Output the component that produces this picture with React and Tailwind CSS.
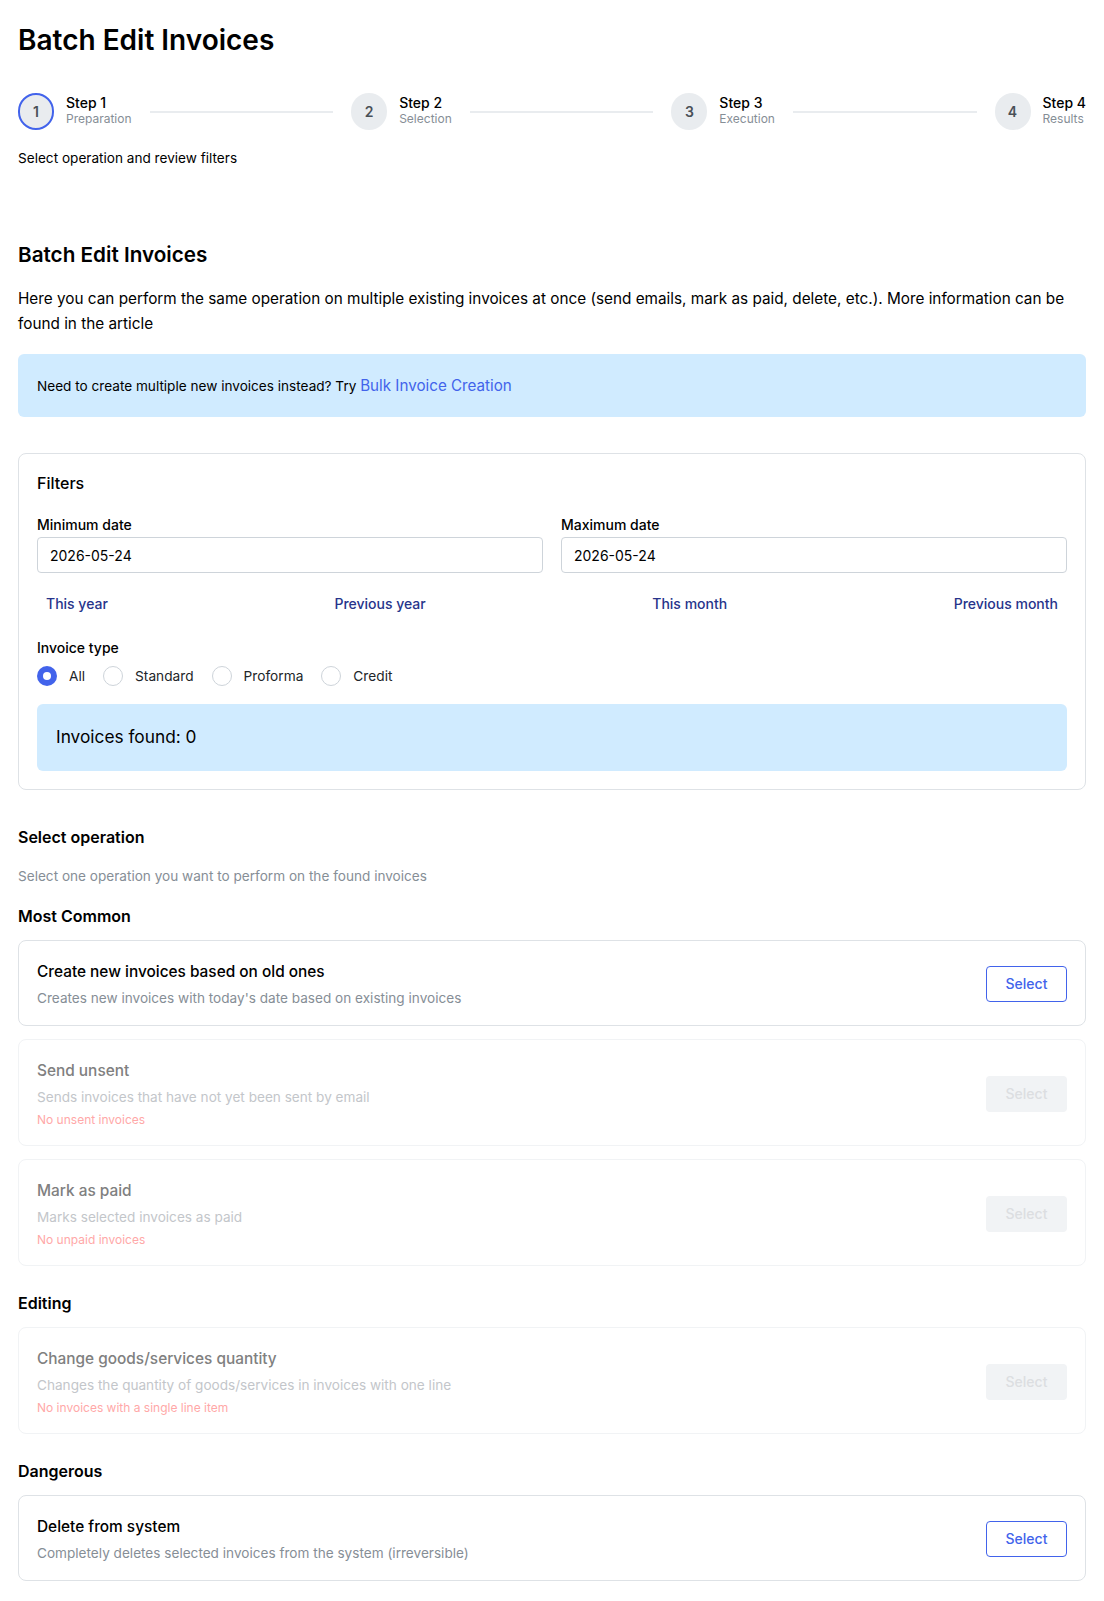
import { Fragment } from "react";

const steps = [
  { n: 1, title: "Step 1", sub: "Preparation", active: true },
  { n: 2, title: "Step 2", sub: "Selection" },
  { n: 3, title: "Step 3", sub: "Execution" },
  { n: 4, title: "Step 4", sub: "Results" },
];

function Stepper() {
  return (
    <div className="flex items-center">
      {steps.map((s, i) => (
        <Fragment key={s.n}>
          <div className="flex items-center gap-3">
            <div
              className={`flex h-[37px] w-9 items-center justify-center rounded-full bg-[#e9ecef] text-sm font-semibold text-[#495057] ${
                s.active ? "border-2 border-[#4263eb]" : ""
              }`}
            >
              {s.n}
            </div>
            <div className="pb-[3px]">
              <div className="text-sm leading-[17px] font-medium text-black">{s.title}</div>
              <div className="text-xs leading-[16px] text-[#868e96]">{s.sub}</div>
            </div>
          </div>
          {i < 3 && <div className="mx-[18px] h-0.5 flex-1 bg-[#e9ecef]" />}
        </Fragment>
      ))}
    </div>
  );
}

function Radio({ label, checked }) {
  return (
    <label className="flex items-center gap-3">
      <span
        className={`flex size-5 items-center justify-center rounded-full ${
          checked ? "bg-[#4263eb]" : "border border-[#ced4da] bg-white"
        }`}
      >
        {checked && <span className="size-2 rounded-full bg-white" />}
      </span>
      <span className="text-[13.7px] text-[#212529]">{label}</span>
    </label>
  );
}

function DateField({ label, value }) {
  return (
    <div className="flex-1">
      <div className="mb-[3px] text-sm leading-[18px] font-medium text-black">{label}</div>
      <div className="flex h-9 items-center rounded-[4px] border border-[#ced4da] bg-white px-3 pt-px text-sm text-black">
        {value}
      </div>
    </div>
  );
}

function OperationCard({ title, desc, warning, disabled }) {
  return (
    <div
      className={`flex items-center justify-between rounded-lg border px-[18px] pt-[19px] pb-4 ${
        disabled ? "border-[#f1f3f5]" : "border-[#dee2e6]"
      }`}
    >
      <div>
        <div className={`text-[15.4px] leading-6 font-medium ${disabled ? "text-[#808080]" : "text-black"}`}>{title}</div>
        <div className={`mt-[3px] text-[13.6px] leading-[22px] ${disabled ? "text-[#c3c6ca]" : "text-[#868e96]"}`}>{desc}</div>
        {warning && <div className="mt-[3px] text-xs leading-[18px] text-[#ffa8a8]">{warning}</div>}
      </div>
      <button
        className={`h-9 w-[81px] rounded-[4px] text-sm font-medium ${
          disabled ? "bg-[#f1f3f5] text-[#dcdee1]" : "border border-[#4263eb] text-[#4263eb]"
        }`}
      >
        Select
      </button>
    </div>
  );
}

export default function App() {
  return (
    <div className="min-h-[1601px] bg-white p-[18px] font-['Inter',sans-serif] text-black">
      <h1 className="mt-[3px] text-[28px] leading-[38px] font-semibold">Batch Edit Invoices</h1>
      <div className="mt-[34px]">
        <Stepper />
      </div>
      <p className="mt-[19px] text-[13.6px] leading-[18px]">Select operation and review filters</p>

      <h2 className="mt-[74px] text-[20.7px] leading-7 font-semibold">Batch Edit Invoices</h2>
      <p className="mt-[18px] text-[15.3px] leading-[24.5px]">
        Here you can perform the same operation on multiple existing invoices at once (send emails, mark as paid,
        delete, etc.). More information can be found in the article
      </p>

      <div className="mt-[18px] flex h-[63px] items-center rounded-[6px] bg-[#d0ebff] px-[19px] pt-0.5 text-[13.6px]">
        <span>Need to create multiple new invoices instead? Try&nbsp;</span>
        <a className="text-[15.2px] text-[#4263eb]">Bulk Invoice Creation</a>
      </div>

      <div className="mt-9 rounded-lg border border-[#dee2e6] p-[18px]">
        <div className="mt-px text-base leading-5 font-medium">Filters</div>
        <div className="mt-[23px] flex gap-[18px]">
          <DateField label="Minimum date" value="2026-05-24" />
          <DateField label="Maximum date" value="2026-05-24" />
        </div>
        <div className="mt-[21px] flex justify-between px-[9px] text-sm leading-[20px] font-medium text-[#27348b]">
          <a>This year</a>
          <a>Previous year</a>
          <a>This month</a>
          <a>Previous month</a>
        </div>
        <div className="mt-[25px] text-sm leading-[18px] font-medium">Invoice type</div>
        <div className="mt-[9px] flex gap-[18px]">
          <Radio label="All" checked />
          <Radio label="Standard" />
          <Radio label="Proforma" />
          <Radio label="Credit" />
        </div>
        <div className="mt-[17px] flex h-[67px] items-center rounded-[6px] bg-[#d0ebff] px-[19px] text-[17.3px]">
          Invoices found: 0
        </div>
      </div>

      <h3 className="mt-[35px] text-base leading-6 font-semibold">Select operation</h3>
      <p className="mt-[17px] text-[13.6px] leading-[20px] text-[#868e96]">Select one operation you want to perform on the found invoices</p>

      <h4 className="mt-5 text-base leading-5 font-semibold">Most Common</h4>
      <div className="mt-[14px] flex flex-col gap-[13px]">
        <OperationCard title="Create new invoices based on old ones" desc="Creates new invoices with today's date based on existing invoices" />
        <OperationCard disabled title="Send unsent" desc="Sends invoices that have not yet been sent by email" warning="No unsent invoices" />
        <OperationCard disabled title="Mark as paid" desc="Marks selected invoices as paid" warning="No unpaid invoices" />
      </div>

      <h4 className="mt-[27px] text-base leading-5 font-semibold">Editing</h4>
      <div className="mt-[14px]">
        <OperationCard disabled title="Change goods/services quantity" desc="Changes the quantity of goods/services in invoices with one line" warning="No invoices with a single line item" />
      </div>

      <h4 className="mt-[27px] text-base leading-5 font-semibold">Dangerous</h4>
      <div className="mt-[14px]">
        <OperationCard title="Delete from system" desc="Completely deletes selected invoices from the system (irreversible)" />
      </div>
    </div>
  );
}
